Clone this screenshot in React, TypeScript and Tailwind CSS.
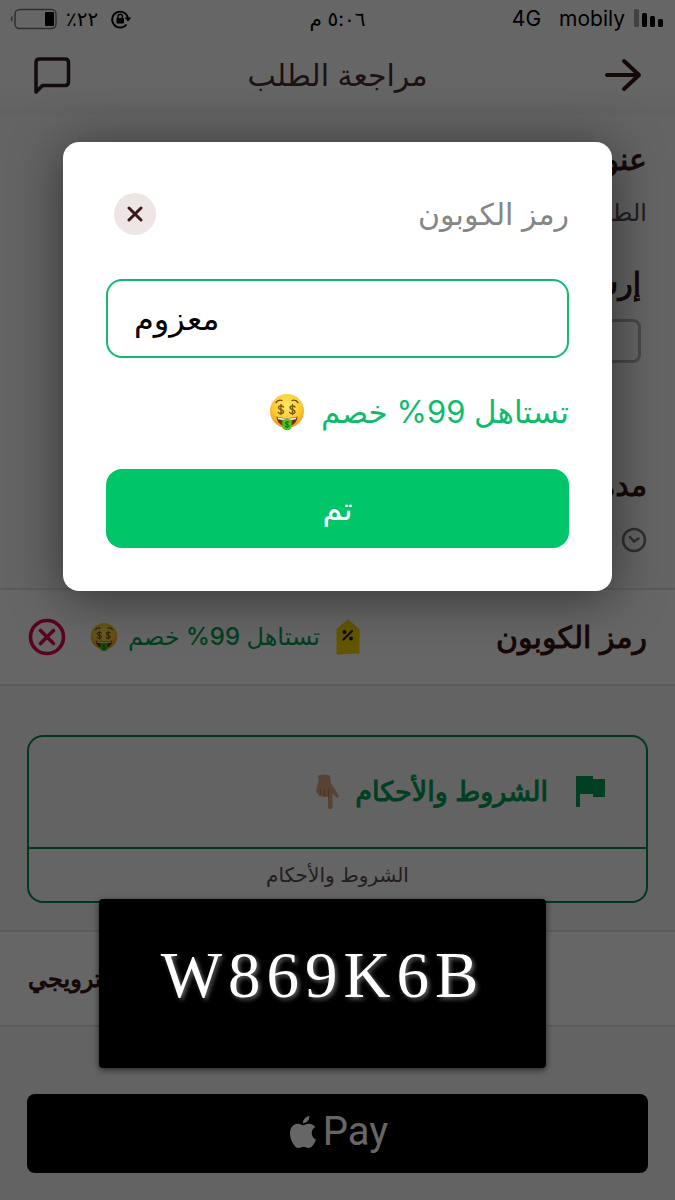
import type { ReactNode } from "react";

function MoneyFace({ className }: { className: string }) {
  return (
    <svg viewBox="0 0 36 38" className={className} role="img" aria-label="وجه المال">
      <defs>
        <radialGradient id="face" cx="0.5" cy="0.35" r="0.65">
          <stop offset="0" stopColor="#ffe95e" />
          <stop offset="0.65" stopColor="#fcc934" />
          <stop offset="1" stopColor="#ee9617" />
        </radialGradient>
      </defs>
      <circle cx="18" cy="18" r="17" fill="url(#face)" />
      <path d="M7 9.5c1.5-2 4-2.800 6-2M23 7.500c2.200-.8 4.500 0 6 2" stroke="#6b4310" strokeWidth="1.300" fill="none" strokeLinecap="round" />
      <g fill="none" stroke="#7a5a0c" strokeWidth="1.400" strokeLinecap="round">
        <path d="M14.500 14c-1-1.500-5-1.500-5 .7 0 2.500 5 1.400 5 4 0 2.300-4.300 2.200-5.300.6M12 11.500v10" />
        <path d="M26 14c-1-1.500-5-1.500-5 .7 0 2.500 5 1.400 5 4 0 2.300-4.300 2.200-5.300.6M23.500 11.500v10" />
      </g>
      <path d="M7.500 23.500c6.500 2 14.500 2 21 0-.5 6.200-4.800 10-10.500 10s-10-3.800-10.500-10z" fill="#70300c" />
      <path d="M8.500 24.200c6 1.600 13 1.600 19 0l-.6 2c-5.500 1.200-12.300 1.200-17.800 0z" fill="#fff3d0" />
      <path d="M13.300 27c3-1.300 6.400-1.300 9.400 0v6.500c0 5-9.400 5-9.400 0z" fill="#4fc21d" />
      <path d="M20 29.500c-1-1-3.800-.9-3.800.6 0 1.700 3.800.9 3.800 2.700 0 1.600-3 1.500-4 .4M18 28v7" stroke="#176b12" strokeWidth="1" fill="none" />
    </svg>
  );
}

function PointDown() {
  return (
    <svg viewBox="0 0 24 36" className="h-9 w-6" role="img" aria-label="إشارة للأسفل">
      <path d="M3 1.500C6 .5 12 .5 15 1.500l1 8 3.500 5 4 7c.8 1.800-1 2.800-2.500 1.500L17.500 19.500V33c0 3-4.500 3-4.500 0V22.500c-3 1-5 .8-6-.3-3 .2-4-1-4-2.700-2-.8-2-2.500-1.500-4.500C1.300 12 3.500 10 3.500 7z" fill="#dba57f" />
      <path d="M5.500 15v5M9.500 15.500v6M13.500 15v8" stroke="#b98058" strokeWidth="1" fill="none" strokeLinecap="round" />
    </svg>
  );
}

function CouponTag() {
  return (
    <svg viewBox="0 0 24 36" className="h-9 w-6" aria-hidden="true">
      <path d="M12 .5 22.500 9c.7.6 1 1 1 2v22.500c0 .8-.4 1-1 1L2 35.500c-1 0-1.500-.3-1.500-1.200V11c0-1 .3-1.500 1-2z" fill="#f8d606" />
      <g fill="none" stroke="#2c1414">
        <path d="m7.500 20.500 8.500-8.500" strokeWidth="2" strokeLinecap="round" />
        <circle cx="8.500" cy="13" r="1" strokeWidth="2" />
        <circle cx="15" cy="19.500" r="1" strokeWidth="2" />
      </g>
    </svg>
  );
}

function StatusBar() {
  return (
    <div className="grid h-[38px] grid-cols-[1fr_auto_1fr] items-center px-2.5 text-xl text-black">
      <div className="flex items-center gap-2">
        <svg viewBox="0 0 48 22" className="h-[22px] w-12" aria-hidden="true">
          <path d="M2.500 8C.3 9 .3 13 2.500 14z" fill="#777" />
          <rect x="5" y="1.500" width="41" height="19" rx="4.500" fill="none" stroke="#777" strokeWidth="1.500" />
          <rect x="35" y="4" width="9" height="14" rx="1" />
        </svg>
        <span dir="rtl">٢٢٪</span>
        <svg viewBox="0 0 22 20" className="ms-1 h-5 w-[22px]" fill="none" stroke="#000" strokeWidth="1.800" aria-hidden="true">
          <path d="M16.500 15.500A8 8 0 1 1 18 9" />
          <path d="m14.500 8.500 3.500 4 3.300-4z" fill="#000" stroke="none" />
          <rect x="6.500" y="9" width="7.500" height="5.500" rx="0.800" fill="#000" stroke="none" />
          <path d="M8 9.500V7.500a2.200 2.200 0 0 1 4.400 0v2" strokeWidth="1.400" />
        </svg>
      </div>
      <span dir="rtl">٥:٠٦ م</span>
      <div className="flex items-center justify-end font-['Inter'] text-[21px]">
        <span>4G</span>
        <span className="ms-[18px]">mobily</span>
        <svg viewBox="0 0 32 20" className="ms-2 h-5 w-8" aria-hidden="true">
          <rect x="1" y="0" width="5" height="18" rx="1.500" fill="#a3a3a3" />
          <rect x="9" y="4" width="5" height="14" rx="1.500" />
          <rect x="17" y="7" width="5" height="11" rx="1.500" />
          <rect x="25" y="10" width="5" height="8" rx="1.500" />
        </svg>
      </div>
    </div>
  );
}

function SectionTitle({ children }: { children: ReactNode }) {
  return <h2 className="text-3xl leading-10 text-[#3a1414] [-webkit-text-stroke:1px]">{children}</h2>;
}

function ReviewPage() {
  return (
    <main className="bg-white text-[#3a1414]" dir="rtl">
      <header dir="ltr">
        <StatusBar />
        <div className="grid h-[77px] grid-cols-[40px_1fr_40px] items-center bg-linear-to-b from-white from-60% to-[#f4f4f4] px-8 pb-1">
          <button type="button" aria-label="المحادثة">
            <svg viewBox="0 0 40 40" className="size-10" fill="none" stroke="#2e1a1c" strokeWidth="3.500" strokeLinejoin="round" aria-hidden="true">
              <path d="M4 37V7.500Q4 4 7.500 4H33q3.500 0 3.500 3.500V27q0 3.500-3.500 3.500H10.500z" />
            </svg>
          </button>
          <h1 className="text-center text-3xl leading-9 text-[#4a2c30]" dir="rtl">مراجعة الطلب</h1>
          <button type="button" aria-label="رجوع">
            <svg viewBox="0 0 40 40" className="size-10" fill="none" stroke="#3a1414" strokeWidth="4" strokeLinecap="round" strokeLinejoin="round" aria-hidden="true">
              <path d="M4 20h32M21 6l15 14-15 14" />
            </svg>
          </button>
        </div>
      </header>

      <section className="h-[475px] border-b-2 border-[#e4e4e4] bg-[#fafafa] px-7 pt-6">
        <SectionTitle>عنوان التوصيل</SectionTitle>
        <p className="mt-4 text-2xl leading-9 text-[#5c4a4a]">الطريق</p>
        <div className="mt-8 px-1.5">
          <SectionTitle>إرشادات</SectionTitle>
          <div className="mt-4 h-11 w-1/2 rounded-lg border-[3px] border-[#b5b5b5]" />
        </div>
        <div className="mt-[102px]">
          <SectionTitle>مدة التوصيل</SectionTitle>
          <svg viewBox="0 0 26 26" className="mt-[22px] size-[26px]" fill="none" stroke="#777" strokeWidth="2.500" strokeLinecap="round" aria-hidden="true">
            <circle cx="13" cy="13" r="11" />
            <path d="m9 10 4 4.500 4.500-3" />
          </svg>
        </div>
      </section>

      <section className="flex h-24 items-center border-b-2 border-[#e4e4e4] px-7">
        <SectionTitle>رمز الكوبون</SectionTitle>
        <div className="ms-auto flex items-center gap-4">
          <CouponTag />
          <p className="flex items-center gap-2.5 text-2xl font-medium text-[#009e55]">
            <span>تستاهل 99% خصم</span>
            <MoneyFace className="h-[30px] w-7" />
          </p>
          <button type="button" aria-label="إزالة الكوبون" className="ms-2">
            <svg viewBox="0 0 38 38" className="size-[38px]" fill="none" stroke="#e2094f" strokeWidth="3.600" strokeLinecap="round" aria-hidden="true">
              <circle cx="19" cy="19" r="16.500" />
              <path d="m12.500 12.500 13 13m0-13-13 13" />
            </svg>
          </button>
        </div>
      </section>

      <section className="border-b-2 border-[#e4e4e4] bg-[#f8f8f8] px-[27px] pt-[49px] pb-[27px]">
        <div className="rounded-2xl border-2 border-[#00894a]">
          <div className="flex h-28 items-center gap-7 border-b-2 border-[#00894a] px-10">
            <svg viewBox="0 0 30 32" className="h-8 w-[30px] -scale-x-100" fill="#009e55" aria-hidden="true">
              <path d="M30 0H13v3H1v18h12v-3h13v13h4z" />
            </svg>
            <p className="flex items-center gap-4 text-[27px] leading-9 text-[#009e55] [-webkit-text-stroke:1px]">
              <span>الشروط والأحكام</span>
              <PointDown />
            </p>
          </div>
          <p className="h-[52px] rounded-b-2xl bg-white/50 text-center text-xl leading-[52px] text-[#5c4a4a]">الشروط والأحكام</p>
        </div>
      </section>

      <section className="flex h-[95px] items-center justify-end border-b-2 border-[#e4e4e4] px-7">
        <p className="text-2xl [-webkit-text-stroke:1px]">ترويجي</p>
      </section>

      <section className="bg-[#f8f8f8] px-[27px] pt-[67px] pb-[27px]">
        <button type="button" aria-label="Apple Pay" dir="ltr" className="flex h-[79px] w-full items-center justify-center gap-1 rounded-lg bg-black text-white">
          <svg viewBox="0 0 24 24" className="mb-1 size-8" fill="currentColor" aria-hidden="true">
            <path d="M12.152 6.896c-.948 0-2.415-1.078-3.960-1.040-2.040.027-3.910 1.183-4.961 3.014-2.117 3.675-.546 9.103 1.519 12.090 1.013 1.454 2.208 3.090 3.792 3.039 1.520-.065 2.090-.987 3.935-.987 1.831 0 2.350.987 3.960.948 1.637-.026 2.676-1.480 3.676-2.948 1.156-1.688 1.636-3.325 1.662-3.415-.039-.013-3.182-1.221-3.220-4.857-.026-3.040 2.480-4.494 2.597-4.559-1.429-2.090-3.623-2.324-4.390-2.376-2-.156-3.675 1.090-4.610 1.090zM15.530 3.830c.843-1.012 1.400-2.427 1.245-3.830-1.207.052-2.662.805-3.532 1.818-.780.896-1.454 2.338-1.273 3.714 1.338.104 2.715-.688 3.559-1.701" />
          </svg>
          <span className="pb-1 font-['Roboto'] text-[40px]">Pay</span>
        </button>
      </section>
    </main>
  );
}

function CouponDialog() {
  return (
    <div
      role="dialog"
      aria-modal="true"
      aria-labelledby="coupon-title"
      dir="rtl"
      className="absolute inset-x-[63px] top-[142px] rounded-2xl bg-white px-[43px] pt-[50px] pb-[43px] shadow-[0_6px_50px_rgba(0,0,0,0.5)]"
    >
      <div className="flex h-11 items-center justify-between pe-2">
        <label id="coupon-title" htmlFor="coupon-code" className="text-3xl text-[#868686]">رمز الكوبون</label>
        <button type="button" aria-label="إغلاق" className="flex size-[42px] items-center justify-center rounded-full bg-[#ede6e5]">
          <svg viewBox="0 0 16 16" className="size-4" fill="none" stroke="#3a1a14" strokeWidth="3" strokeLinecap="round" aria-hidden="true">
            <path d="m2 2 12 12M14 2 2 14" />
          </svg>
        </button>
      </div>
      <input
        id="coupon-code"
        type="text"
        defaultValue="معزوم"
        className="mt-[43px] h-[79px] w-full rounded-2xl border-2 border-[#12b873] bg-white px-[26px] text-left text-[32px] text-black outline-none"
      />
      <p className="mt-8 flex h-11 items-center gap-4 text-[31px] text-[#0dbb6c]">
        <span>تستاهل 99% خصم</span>
        <MoneyFace className="h-[38px] w-9" />
      </p>
      <button type="button" className="mt-[35px] h-[79px] w-full rounded-2xl bg-[#00c569] text-[32px] text-white">تم</button>
    </div>
  );
}

export default function App() {
  return (
    <div className="relative min-h-screen overflow-hidden font-['Inter','DejaVu_Sans',sans-serif]">
      <ReviewPage />
      <div className="absolute inset-0 bg-black/60" />
      <CouponDialog />
      <div className="absolute top-[899px] right-[129px] left-[99px] flex h-[169px] justify-center rounded bg-black pt-9 shadow-[0_2px_6px_rgba(0,0,0,0.6)]">
        <p className="font-['Liberation_Serif',serif] text-[65px] leading-[80px] tracking-[6px] text-white [text-shadow:2px_2px_4px_#666]">W869K6B</p>
      </div>
    </div>
  );
}
